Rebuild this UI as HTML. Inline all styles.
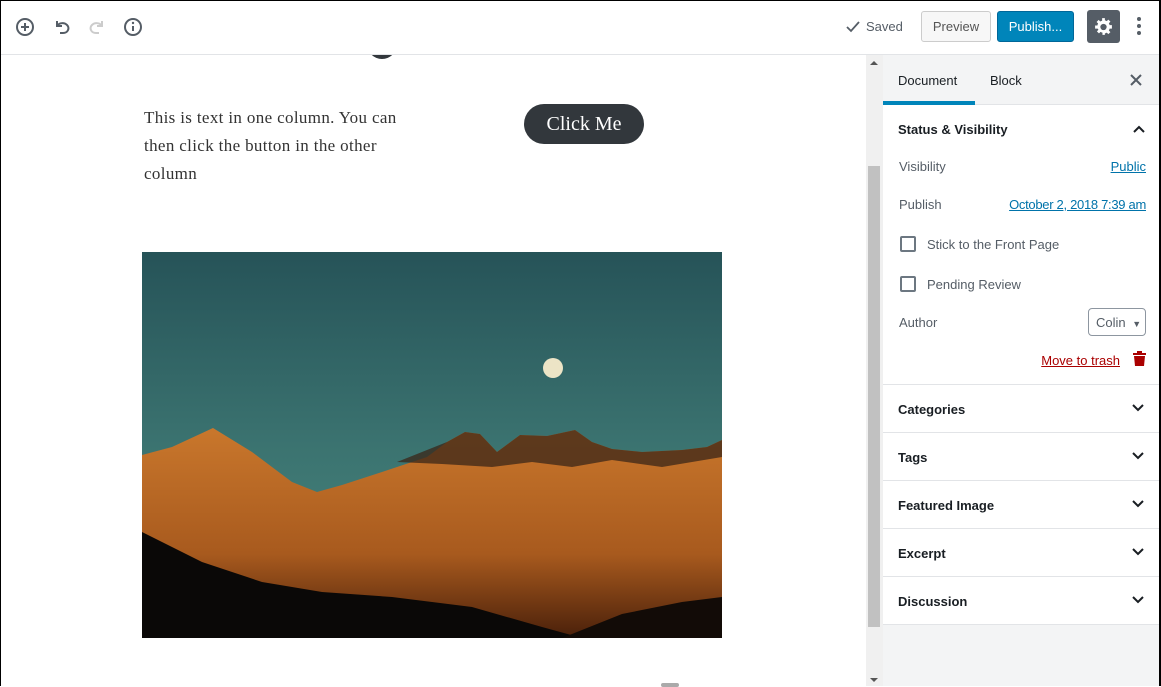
<!DOCTYPE html>
<html><head><meta charset="utf-8"><style>
*{box-sizing:border-box;margin:0;padding:0}
body{width:1161px;height:686px;overflow:hidden;background:#fff;font-family:"Liberation Sans",sans-serif;position:relative}
.abs{position:absolute}
.hdr{left:0;top:0;width:1160px;height:55px;border-bottom:1px solid #e2e4e7;background:#fff}
.serif{font-family:"Liberation Serif",serif;color:#333}
.side{left:883px;top:55px;width:276px;height:631px;background:#f3f4f5}
.panel{background:#fff}
.row{position:absolute;left:0;width:276px;border-bottom:1px solid #e2e4e7;background:#fff;font-size:13px;color:#191e23;font-weight:bold}
.row span{position:absolute;left:15px;top:17px}
.row svg{position:absolute;right:14px;top:18px}
.lbl{font-size:13px;color:#555d66}
a{color:#0073aa;text-decoration:underline}
</style></head><body>
<div class="abs hdr">
<svg class="abs" style="left:14px;top:16px" width="22" height="22" viewBox="0 0 22 22"><circle cx="11" cy="11" r="8" fill="none" stroke="#555d66" stroke-width="2"/><path d="M11 7v8M7 11h8" stroke="#555d66" stroke-width="2"/></svg>
<svg class="abs" style="left:51px;top:16px" width="22" height="22" viewBox="0 0 22 22"><path d="M6 5v5h5" fill="none" stroke="#555d66" stroke-width="2"/><path d="M6.5 9.5C8 7 13 6 16 9s1 8-4 8H9" fill="none" stroke="#555d66" stroke-width="2"/></svg>
<svg class="abs" style="left:86px;top:16px" width="22" height="22" viewBox="0 0 22 22"><path d="M16 5v5h-5" fill="none" stroke="#ccc" stroke-width="2"/><path d="M15.5 9.5C14 7 9 6 6 9s-1 8 4 8h3" fill="none" stroke="#ccc" stroke-width="2"/></svg>
<svg class="abs" style="left:122px;top:16px" width="22" height="22" viewBox="0 0 22 22"><circle cx="11" cy="11" r="8" fill="none" stroke="#555d66" stroke-width="2"/><path d="M11 10v5" stroke="#555d66" stroke-width="2"/><circle cx="11" cy="7" r="1.2" fill="#555d66"/></svg>
<svg class="abs" style="left:846px;top:20px" width="14" height="14" viewBox="0 0 14 14"><path d="M1 7l4 4 8-9" fill="none" stroke="#555d66" stroke-width="1.8"/></svg>
<div class="abs" style="left:866px;top:19px;font-size:13px;color:#555d66">Saved</div>
<div class="abs" style="left:921px;top:11px;width:70px;height:31px;border:1px solid #ccc;border-radius:3px;background:#f7f7f7;font-size:13px;color:#555;text-align:center;line-height:29px">Preview</div>
<div class="abs" style="left:997px;top:11px;width:77px;height:31px;border:1px solid #006799;border-radius:3px;background:#0085ba;font-size:13px;color:#fff;text-align:center;line-height:29px">Publish...</div>
<div class="abs" style="left:1087px;top:10px;width:33px;height:33px;border-radius:3px;background:#555d66"></div>
<svg class="abs" style="left:1093px;top:16px" width="21" height="21" viewBox="0 0 20 20"><path fill="#fff" d="M18 12h-2.2a6 6 0 0 1-.7 1.8l1.5 1.5-2 2-1.5-1.5a6 6 0 0 1-1.8.7V18H9v-2.2a6 6 0 0 1-1.8-.7L5.7 16.6l-2-2 1.5-1.5A6 6 0 0 1 4.5 12H2V9h2.2a6 6 0 0 1 .7-1.8L3.4 5.7l2-2 1.5 1.5A6 6 0 0 1 8.7 4.5V2h2.6v2.2a6 6 0 0 1 1.8.7l1.5-1.5 2 2-1.5 1.5a6 6 0 0 1 .7 1.8H18zM10 7.5a3 3 0 1 0 0 6 3 3 0 0 0 0-6z"/></svg>
<div class="abs" style="left:1137px;top:17px;width:4px;height:4px;border-radius:2px;background:#555d66;box-shadow:0 7px 0 #555d66,0 14px 0 #555d66"></div>
</div>
<div class="abs" style="left:367px;top:38px;width:30px;height:21px;border-radius:0 0 15px 15px;background:#32373c;clip-path:inset(17px 0 0 0)"></div>
<div class="abs serif" style="left:144px;top:104px;font-size:17px;line-height:28px;width:264px;letter-spacing:0.35px">This is text in one column. You can then click the button in the other column</div>
<div class="abs serif" style="left:524px;top:104px;width:120px;height:40px;border-radius:20px;background:#32373c;color:#fff;font-size:20px;text-align:center;line-height:40px">Click Me</div>
<svg class="abs" style="left:142px;top:252px" width="580" height="386" viewBox="0 0 580 386">
<defs><linearGradient id="sky" x1="0" y1="0" x2="0" y2="1"><stop offset="0" stop-color="#265358"/><stop offset="0.5" stop-color="#3b7370"/><stop offset="1" stop-color="#4b8a80"/></linearGradient>
<linearGradient id="m" x1="0" y1="0" x2="0" y2="1"><stop offset="0" stop-color="#c9772c"/><stop offset="0.6" stop-color="#a85a1e"/><stop offset="1" stop-color="#4a200a"/></linearGradient></defs>
<rect width="580" height="386" fill="url(#sky)"/>
<circle cx="411" cy="116" r="10" fill="#ece4c6"/>
<path d="M0 203L30 195L71 176L110 200L150 230L175 240L200 233L240 220L285 205L305 190L323 180L338 182L355 200L378 183L405 184L433 178L450 190L470 197L500 200L540 198L565 195L580 188V386H0Z" fill="url(#m)"/>
<path d="M255 210L305 190L323 180L338 182L355 200L378 183L405 184L433 178L450 190L470 197L500 200L540 198L565 195L580 188V205L520 215L470 208L430 215L390 210L350 215L300 212Z" fill="#3a2618" opacity="0.75"/>
<path d="M0 280L60 310L120 330L180 340L250 345L330 355L400 375L440 386H0Z" fill="#0a0807"/>
<path d="M420 386L480 362L540 350L580 345V386Z" fill="#120b07"/>
</svg>
<div class="abs" style="left:661px;top:683px;width:18px;height:4px;background:#aaa;border-radius:2px"></div>
<div class="abs" style="left:866px;top:55px;width:17px;height:631px;background:#f0f0f0"></div>
<div class="abs" style="left:868px;top:166px;width:12px;height:461px;background:#c1c1c1"></div>
<div class="abs" style="left:870px;top:61px;width:0;height:0;border:4px solid transparent;border-bottom-color:#555;border-top:none"></div>
<div class="abs" style="left:870px;top:678px;width:0;height:0;border:4px solid transparent;border-top-color:#555;border-bottom:none"></div>
<div class="abs side">
<div class="abs" style="left:0;top:0;width:276px;height:50px;border-bottom:1px solid #e2e4e7"></div>
<div class="abs" style="left:15px;top:18px;font-size:13px;color:#191e23">Document</div>
<div class="abs" style="left:107px;top:18px;font-size:13px;color:#191e23">Block</div>
<div class="abs" style="left:0;top:46px;width:92px;height:4px;background:#0085ba"></div>
<svg class="abs" style="left:247px;top:19px" width="12" height="12" viewBox="0 0 12 12"><path d="M1 1l10 10M11 1L1 11" stroke="#555d66" stroke-width="2"/></svg>
<div class="abs panel" style="left:0;top:50px;width:276px;height:280px;border-bottom:1px solid #e2e4e7">
<div class="abs" style="left:15px;top:17px;font-size:13px;font-weight:bold;color:#191e23">Status &amp; Visibility</div>
<svg class="abs" style="left:249px;top:19px" width="14" height="10" viewBox="0 0 14 10"><path d="M2 8l5-5 5 5" fill="none" stroke="#191e23" stroke-width="2"/></svg>
<div class="abs lbl" style="left:16px;top:54px">Visibility</div>
<a class="abs" style="right:13px;top:54px;font-size:13px">Public</a>
<div class="abs lbl" style="left:16px;top:92px">Publish</div>
<a class="abs" style="right:13px;top:92px;font-size:13px;letter-spacing:-0.3px">October 2, 2018 7:39 am</a>
<div class="abs" style="left:17px;top:131px;width:16px;height:16px;border:2px solid #6c7781;border-radius:2px"></div>
<div class="abs lbl" style="left:44px;top:132px">Stick to the Front Page</div>
<div class="abs" style="left:17px;top:171px;width:16px;height:16px;border:2px solid #6c7781;border-radius:2px"></div>
<div class="abs lbl" style="left:44px;top:172px">Pending Review</div>
<div class="abs lbl" style="left:16px;top:210px">Author</div>
<div class="abs" style="left:205px;top:203px;width:58px;height:28px;border:1px solid #8d96a0;border-radius:4px;font-size:13px;color:#555d66;padding:6px 0 0 7px;white-space:nowrap">Colin <span style="font-size:9px;margin-left:3px">▼</span></div>
<a class="abs" style="right:39px;top:248px;font-size:13px;color:#a00">Move to trash</a>
<svg class="abs" style="left:250px;top:246px" width="13" height="15" viewBox="0 0 13 15"><path d="M0 2h13v2H0zM4 0h5v2H4zM1 5h11l-1 10H2z" fill="#a00"/></svg>
</div>
<div class="row" style="top:330px;height:48px"><span>Categories</span><svg width="14" height="10" viewBox="0 0 14 10"><path d="M2 2l5 5 5-5" fill="none" stroke="#191e23" stroke-width="2"/></svg></div>
<div class="row" style="top:378px;height:48px"><span>Tags</span><svg width="14" height="10" viewBox="0 0 14 10"><path d="M2 2l5 5 5-5" fill="none" stroke="#191e23" stroke-width="2"/></svg></div>
<div class="row" style="top:426px;height:48px"><span>Featured Image</span><svg width="14" height="10" viewBox="0 0 14 10"><path d="M2 2l5 5 5-5" fill="none" stroke="#191e23" stroke-width="2"/></svg></div>
<div class="row" style="top:474px;height:48px"><span>Excerpt</span><svg width="14" height="10" viewBox="0 0 14 10"><path d="M2 2l5 5 5-5" fill="none" stroke="#191e23" stroke-width="2"/></svg></div>
<div class="row" style="top:522px;height:48px"><span>Discussion</span><svg width="14" height="10" viewBox="0 0 14 10"><path d="M2 2l5 5 5-5" fill="none" stroke="#191e23" stroke-width="2"/></svg></div>
</div>
<div class="abs" style="left:0;top:0;width:1161px;height:1px;background:#000"></div>
<div class="abs" style="left:0;top:0;width:1px;height:686px;background:#000"></div>
<div class="abs" style="left:1159px;top:0;width:2px;height:686px;background:#000"></div>
</body></html>
